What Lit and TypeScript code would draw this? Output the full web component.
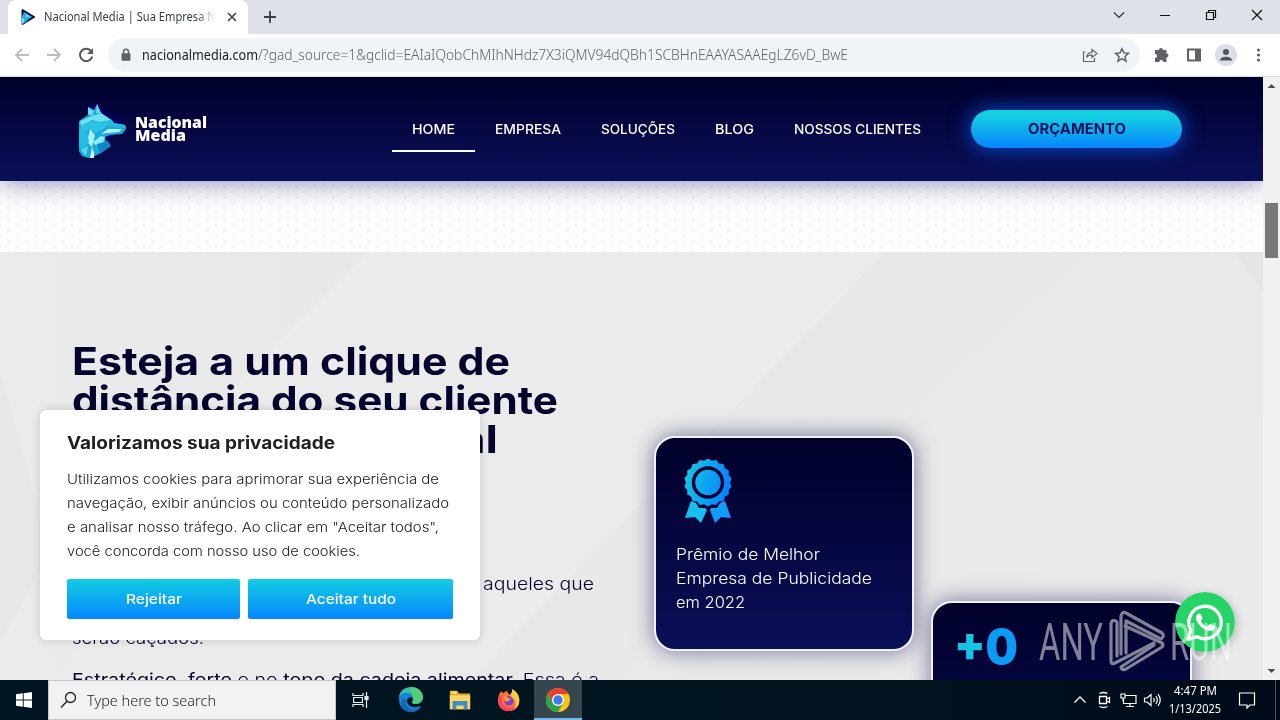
import { LitElement, html, css, svg } from "lit"
import { customElement, property } from "lit/decorators.js"
import { classMap } from "lit/directives/class-map.js"

// One line of text, stretched so that it fills the given width
@customElement("fit-line")
class FitLine extends LitElement {

  static styles = css`
  :host {
    display: block;
    white-space: pre;
  }

  .line {
    display: inline-block;
    line-height: inherit;
    vertical-align: top;
    transform-origin: 0 50%;
  }
`

  @property({ type: Number }) width = 0

  render() {
    return html`<span class="line"><slot></slot></span>`
  }

  firstUpdated() {
    const line = this.renderRoot.querySelector(".line") as HTMLElement
    const natural = line.getBoundingClientRect().width
    if (this.width && natural) {
      this.style.width = `${this.width}px`
      line.style.transform = `scaleX(${this.width / natural})`
    }
  }
}

@customElement("browser-chrome")
class BrowserChrome extends LitElement {

  static styles = css`
  :host {
    display: block;
    height: 77px;
    box-sizing: border-box;
    background: #fff;
    border-bottom: 1px solid #dadce4;
    font-family: "Noto Sans", "Open Sans", sans-serif;
    color: #3c4043;
  }

  .strip {
    display: flex;
    height: 34px;
    background: #dee1e8;
    padding-left: 8px;
  }

  .tab {
    display: flex;
    align-items: center;
    width: 240px;
    box-sizing: border-box;
    padding: 0 10px 0 12px;
    background: #fff;
    border-radius: 8px 8px 0 0;
  }

  .favicon {
    margin-right: 8px;
  }

  .title {
    flex: 1;
    height: 18px;
    font-size: 12px;
    line-height: 18px;
    overflow: hidden;
    mask-image: linear-gradient(90deg, #000 152px, transparent 172px);
  }

  .new-tab {
    margin: 10px 0 0 15px;
  }

  .windows {
    display: flex;
    align-items: center;
    gap: 34px;
    margin: -5px 17px 0 auto;
  }

  .toolbar {
    display: flex;
    align-items: center;
    height: 42px;
    padding: 0 8px 0 14px;
  }

  .toolbar > svg {
    flex: none;
  }

  .back, .forward {
    margin-right: 16px;
  }

  .omnibox {
    display: flex;
    align-items: center;
    width: 1032px;
    height: 34px;
    box-sizing: border-box;
    margin: 0 14px 0 14px;
    padding: 0 10px 0 12px;
    border-radius: 17px;
    background: #f0f3f7;
    font-size: 14px;
    font-weight: 300;
    line-height: 20px;
    color: #5f6368;
  }

  .lock {
    margin-right: 10px;
  }

  .host {
    font-weight: 400;
    color: #202124;
  }

  .share {
    margin: 0 16px 0 auto;
  }

  .side {
    margin: 0 13px 0 16px;
  }

  .avatar {
    margin-right: 13px;
  }
`

  render() {
    return html`
    <div class="strip">
      <div class="tab">
        <svg class="favicon" width="16" height="16" viewBox="0 0 16 16">
          <path d="M2.500 1.200 14 8 2.500 14.800Z" fill="#35c4ec" stroke="#090d50" stroke-width="2" stroke-linejoin="round" />
          <path d="M1.500 7l4-3 5 4-5 5.500-4 1z" fill="#29a8e0" />
          <path d="M1.500 9l3 1-1 4.500-2 .5zM6 5l4 2.500-4 1z" fill="#6fe0f5" />
        </svg>
        <div class="title"><fit-line width="178">Nacional Media | Sua Empresa Na</fit-line></div>
        <svg width="12" height="12" viewBox="0 0 12 12"><path d="M2 2l8 8M10 2l-8 8" stroke="#45494d" stroke-width="1.700" /></svg>
      </div>
      <svg class="new-tab" width="14" height="14" viewBox="0 0 14 14"><path d="M7 1v12M1 7h12" stroke="#3c4043" stroke-width="1.800" /></svg>
      <div class="windows">
        <svg width="12" height="12" viewBox="0 0 12 12"><path d="M1 3.500l5 5 5-5" fill="none" stroke="#333" stroke-width="1.200" /></svg>
        <svg width="12" height="12" viewBox="0 0 12 12"><path d="M1 6.500h10" stroke="#111" /></svg>
        <svg width="12" height="12" viewBox="0 0 12 12"><path d="M1.500 3.500h7v7h-7zM3.500 3.500v-2h7v7h-2" fill="none" stroke="#111" stroke-width="1.200" /></svg>
        <svg width="12" height="12" viewBox="0 0 12 12"><path d="M1 1l10 10M11 1L1 11" stroke="#111" stroke-width="1.200" /></svg>
      </div>
    </div>
    <div class="toolbar">
      <svg class="back" width="16" height="16" viewBox="0 0 16 16"><path d="M15 8H2M8 2L2 8l6 6" fill="none" stroke="#babcbe" stroke-width="1.800" /></svg>
      <svg class="forward" width="16" height="16" viewBox="0 0 16 16"><path d="M1 8h13M8 2l6 6-6 6" fill="none" stroke="#babcbe" stroke-width="1.800" /></svg>
      <svg width="16" height="16" viewBox="0 0 16 16">
        <path d="M13.300 4.300A6.200 6.200 0 1 0 14.200 9.500" fill="none" stroke="#55595d" stroke-width="2" />
        <path d="M15 1v6H9z" fill="#55595d" />
      </svg>
      <div class="omnibox">
        <svg class="lock" width="12" height="14" viewBox="0 0 12 14">
          <path d="M3.500 6V3.800a2.500 2.500 0 0 1 5 0V6" fill="none" stroke="#5f6368" stroke-width="1.500" />
          <rect x="1.500" y="5.300" width="9" height="7.400" rx="1" fill="#5f6368" />
        </svg>
        <fit-line class="host" width="116">nacionalmedia.com</fit-line>
        <fit-line width="590">/?gad_source=1&amp;gclid=EAIaIQobChMIhNHdz7X3iQMV94dQBh1SCBHnEAAYASAAEgLZ6vD_BwE</fit-line>
        <svg class="share" width="16" height="16" viewBox="0 0 16 16">
          <path d="M3.500 5H1.500v9.500h11V11M4.500 10.500C5 7 7 5.500 10 5.400V2.500l5 4-5 4V7.800C7.500 7.800 6 8.500 4.500 10.500z" fill="none" stroke="#5f6368" stroke-width="1.200" />
        </svg>
        <svg width="16" height="16" viewBox="0 0 16 16">
          <path d="M8 1.700l1.900 4.200 4.500.5-3.400 3.100 1 4.600L8 11.700l-4 2.400 1-4.600L1.600 6.400l4.500-.5z" fill="none" stroke="#5f6368" stroke-width="1.500" />
        </svg>
      </div>
      <svg width="16" height="16" viewBox="0 0 16 16">
        <path d="M5 3a2 2 0 0 1 4 0h3.500v3.500a2 2 0 0 1 0 4V15H9.300a2 2 0 0 0-4 0H1v-4a2 2 0 0 0 0-4V3z" fill="#5f6368" />
      </svg>
      <svg class="side" width="16" height="16" viewBox="0 0 16 16">
        <path d="M1 1.500h14v13H1zM3 3.500v9h6v-9z" fill="#5f6368" fill-rule="evenodd" />
      </svg>
      <svg class="avatar" width="22" height="22" viewBox="0 0 22 22">
        <circle cx="11" cy="11" r="11" fill="#dcdfe8" />
        <circle cx="11" cy="8" r="3" fill="#4f5566" />
        <path d="M5 16.500c0-5 12-5 12 0z" fill="#4f5566" />
      </svg>
      <svg width="16" height="16" viewBox="0 0 16 16" fill="#5f6368">
        <circle cx="8.500" cy="3" r="1.600" /><circle cx="8.500" cy="8" r="1.600" /><circle cx="8.500" cy="13" r="1.600" />
      </svg>
    </div>
    `
  }
}

const NAV = [
  { label: "HOME", width: 43, active: true },
  { label: "EMPRESA", width: 66 },
  { label: "SOLUÇÕES", width: 74 },
  { label: "BLOG", width: 39 },
  { label: "NOSSOS CLIENTES", width: 127 }
]

@customElement("site-header")
class SiteHeader extends LitElement {

  static styles = css`
  :host {
    display: flex;
    position: relative;
    z-index: 1;
    height: 104px;
    box-sizing: border-box;
    padding: 0 81px 0 78px;
    background: linear-gradient(#00002b, #050640 45%, #0a1058);
    box-shadow: 0 0 26px rgba(30, 25, 110, 0.55);
    font-family: Inter, "Liberation Sans", sans-serif;
    color: #fff;
  }

  .wolf {
    margin-top: 25px;
  }

  .name {
    width: 74px;
    margin: 39px 0 0 7px;
    font-family: "Open Sans", Inter, sans-serif;
    font-size: 16px;
    font-weight: 800;
    line-height: 12.500px;
  }

  nav {
    display: flex;
    height: 44px;
    margin: 31px 0 0 183px;
    font-size: 13px;
    font-weight: 500;
    line-height: 42px;
  }

  .item {
    padding: 0 20px;
    border-bottom: 2px solid transparent;
  }

  .item.active {
    border-color: #fff;
  }

  .quote {
    display: flex;
    justify-content: center;
    width: 211px;
    height: 38px;
    margin: 33px 0 0 auto;
    border-radius: 19px;
    background: linear-gradient(#14cfe0 15%, #0684ff);
    box-shadow: 0 0 20px 2px rgba(0, 105, 255, 0.65);
    font-size: 14px;
    font-weight: 700;
    line-height: 38px;
    color: #07115c;
  }
`

  render() {
    return html`
    <svg class="wolf" width="50" height="58" viewBox="0 0 50 58">
      <path d="M9 3L15 1 32 10 47 20 41 30 30 38 28 50 17 54 8 30z" fill="#02006a" opacity=".6" />
      <path d="M10 5l6 3 3-6 4 9 11 7 2 3 11 2 1 4-4 5-12 1-5 2 1 5 3 5-12 8-8 3-7-2-3-5V19l9-6z" fill="#1fa8d8" />
      <path d="M10 5l6 4-2 5-4-2zM19 2l4 9-5 0z" fill="#63dcee" />
      <path d="M14 14l9-3 10 7-11 2-8-2-11 6-1-5z" fill="#6de3ef" />
      <path d="M3 24l11-5 9 2 10-3-5 7-10 6-6-4-10 3z" fill="#2bc4e6" />
      <path d="M33 18l3 3 11 2 1 3-13-1-7-1z" fill="#25b9e0" />
      <path d="M23 32l7-5 14 0-3 3-12 1z" fill="#b5f4fa" />
      <path d="M12 27l5 6-3 12-5-5z" fill="#a8f2f7" />
      <path d="M15 40l8-6 4 1-2 6-8 2z" fill="#8aeef5" />
      <path d="M1 30l8-2 2 12-8 8-2-5z" fill="#23bfe3" />
      <path d="M14 45l2 6 0 5-4 0z" fill="#d0fbfd" />
      <path d="M19 42l11-3 3 5-11 8z" fill="#0f87c5" />
      <path d="M3 48l7-4-2 10z" fill="#53dbea" />
    </svg>
    <div class="name">
      <fit-line width="72">Nacional</fit-line>
      <fit-line width="51">Media</fit-line>
    </div>
    <nav>
      ${NAV.map(item => html`
      <div class=${classMap({ item: true, active: !!item.active })}><fit-line width=${item.width}>${item.label}</fit-line></div>
      `)}
    </nav>
    <div class="quote"><fit-line width="98">ORÇAMENTO</fit-line></div>
    `
  }
}

// Scalloped edge of the award medal
const medalPoints = Array.from({ length: 36 }, (_, i) => {
  const r = i % 2 ? 22 : 24
  const a = (i * Math.PI) / 18
  return `${(25 + r * Math.sin(a)).toFixed(1)},${(24.5 - r * Math.cos(a)).toFixed(1)}`
}).join(" ")

@customElement("site-hero")
class SiteHero extends LitElement {

  static styles = css`
  :host {
    display: block;
    font-family: Inter, "Liberation Sans", sans-serif;
    color: #03032e;
  }

  .dots {
    height: 71px;
    background:
      radial-gradient(circle, #f2f2f2 1px, transparent 2px) 0 0 / 18px 11px,
      radial-gradient(circle, #f5f5f5 1px, transparent 2px) 9px 5px / 18px 11px,
      #fdfdfd;
  }

  .section {
    display: flex;
    align-items: flex-start;
    position: relative;
    height: 428px;
    background: #eaeaea;
  }

  .facets {
    position: absolute;
    inset: 0;
  }

  .copy {
    position: relative;
    flex: none;
    width: 654px;
    box-sizing: border-box;
    padding: 90px 0 0 72px;
  }

  h2 {
    margin: 0 0 111px;
    font-size: 38.500px;
    font-weight: 700;
    line-height: 39px;
  }

  .text {
    margin: 0 0 15px;
    font-size: 17.300px;
    font-weight: 300;
    line-height: 27px;
  }

  .split {
    display: flex;
    gap: 5px;
  }

  .card {
    position: relative;
    flex: none;
    box-sizing: border-box;
    border: 2px solid #f1f1ff;
    border-radius: 21px;
    background: linear-gradient(#00002a, #05063f 45%, #0a1058);
    box-shadow: 0 0 22px rgba(18, 18, 90, 0.55);
    color: #fff;
  }

  .award {
    width: 260px;
    height: 215px;
    margin-top: 184px;
    padding: 20px;
    font-size: 15.500px;
    font-weight: 300;
    line-height: 24px;
  }

  .award svg {
    display: block;
    margin: 0 0 19px 7px;
  }

  .counter {
    width: 261px;
    height: 215px;
    margin: 349px 0 0 17px;
    padding: 10px 21px;
  }

  .number {
    width: 62px;
    font-size: 48px;
    font-weight: 900;
    line-height: 68px;
    color: #0a9bf5;
  }

  .plus {
    color: #16c4e4;
  }
`

  render() {
    return html`
    <div class="dots"></div>
    <div class="section">
      <svg class="facets" width="1263" height="428" viewBox="0 0 1263 428">
        <defs>
          <linearGradient id="f1" x1="0" y1="0" x2="1" y2="0.600">
            <stop offset="0" stop-color="#e4e4e4" /><stop offset=".35" stop-color="#e8e8e8" /><stop offset="1" stop-color="#eaeaea" />
          </linearGradient>
          <linearGradient id="f2" x1="0" y1="0" x2="1" y2="0">
            <stop offset="0" stop-color="#ebebeb" /><stop offset="1" stop-color="#e8e8e8" />
          </linearGradient>
        </defs>
        <path d="M0 0h367L200 170 60 428H0z" fill="url(#f2)" />
        <path d="M367 0H885L470 428H60L200 170z" fill="#ebebeb" />
        <path d="M885 0h378v428H470z" fill="url(#f1)" />
        <path d="M1235 0h28v40z" fill="#e5e5e5" />
        <path d="M0 120l50 180-50 90z" fill="#e8e8e8" />
      </svg>
      <div class="copy">
        <h2>
          <fit-line width="438">Esteja a um clique de</fit-line>
          <fit-line width="486">distância do seu cliente</fit-line>
          <fit-line width="426">no ambiente digital</fit-line>
        </h2>
        <div class="text">
          <div class="split">
            <fit-line width="406">No mercado existem os que caçam, e</fit-line>
            <fit-line width="111">aqueles que</fit-line>
          </div>
          <fit-line width="380">ficam parados à espera: esses</fit-line>
          <fit-line width="132">serão caçados.</fit-line>
        </div>
        <div class="text">
          <fit-line width="527"><b>Estratégico, forte</b> e no <b>topo da cadeia alimentar.</b> Essa é a</fit-line>
        </div>
      </div>
      <div class="card award">
        <svg width="50" height="66" viewBox="0 0 50 66">
          <defs>
            <linearGradient id="m" x1="0" y1="0" x2="1" y2=".3">
              <stop offset="0" stop-color="#18cde0" /><stop offset="1" stop-color="#0585ff" />
            </linearGradient>
          </defs>
          <polygon points=${medalPoints} fill="url(#m)" />
          <circle cx="25" cy="24.500" r="14.500" fill="none" stroke="#030336" stroke-width="3.500" />
          <path d="M8 43l5 2 3 5 6 0 2 2-6 13-6-6-10 1z" fill="#18bfee" />
          <path d="M42 43l-5 2-3 5-6 0-1 2 5 13 6-6 10 1z" fill="#109dfb" />
        </svg>
        <fit-line width="144">Prêmio de Melhor</fit-line>
        <fit-line width="196">Empresa de Publicidade</fit-line>
        <fit-line width="69">em 2022</fit-line>
      </div>
      <div class="card counter">
        <div class="number"><fit-line width="64"><span class="plus">+</span>0</fit-line></div>
      </div>
    </div>
    `
  }
}

@customElement("cookie-notice")
class CookieNotice extends LitElement {

  static styles = css`
  :host {
    display: block;
    box-sizing: border-box;
    width: 440px;
    height: 230px;
    padding: 21px 27px;
    border-radius: 6px;
    background: #fff;
    box-shadow: 0 0 10px rgba(0, 0, 0, 0.16);
    font-family: Inter, "Liberation Sans", sans-serif;
    color: #212121;
  }

  .title {
    margin-bottom: 12px;
    font-size: 17.500px;
    font-weight: 700;
    line-height: 24px;
  }

  .text {
    margin-bottom: 16px;
    font-size: 13.500px;
    font-weight: 300;
    line-height: 24px;
  }

  .buttons {
    display: grid;
    grid-template-columns: 173px 205px;
    gap: 8px;
  }

  .button {
    display: flex;
    justify-content: center;
    height: 40px;
    border-radius: 2px;
    background: linear-gradient(#13cde2, #0588ff);
    font-size: 13.500px;
    font-weight: 500;
    line-height: 40px;
    color: #fff;
  }
`

  render() {
    return html`
    <div class="title"><fit-line width="268">Valorizamos sua privacidade</fit-line></div>
    <div class="text">
      <fit-line width="372">Utilizamos cookies para aprimorar sua experiência de</fit-line>
      <fit-line width="382">navegação, exibir anúncios ou conteúdo personalizado</fit-line>
      <fit-line width="372">e analisar nosso tráfego. Ao clicar em "Aceitar todos",</fit-line>
      <fit-line width="293">você concorda com nosso uso de cookies.</fit-line>
    </div>
    <div class="buttons">
      <div class="button"><fit-line width="56">Rejeitar</fit-line></div>
      <div class="button"><fit-line width="90">Aceitar tudo</fit-line></div>
    </div>
    `
  }
}

const edge = svg`
  <path d="M1 14C0 5 6 0 13 0c7 0 12 5 12 10 0 4-3 7-7 7-3 0-4-1-4-2 0-1 1-1 1-3 0-3-3-5-6-5-5 0-8 4-8 7z" fill="#35c1b0" />
  <path d="M13 0c7 0 12 5 12 10 0 4-3 7-7 7-3 0-4-1-4-2 0-1 1-1 1-3 0-1-.5-2.500-2-4z" fill="#5fd365" opacity=".7" />
  <path d="M1 12c0-4 4-7 9-6 3 0 5 3 5 5-3-2-6 0-6 3 0 4 5 7 10 6 2 0 3-1 4-1-2 4-6 6-10 6C6 25 1 20 1 12z" fill="#1683d8" />
  <path d="M9 12c-2 4-1 8 4 10 4 1.500 8-.5 10-3-2 4-6 6-10 6-7 0-11-5-10-9 0-3 3-4.500 6-4z" fill="#125ca8" opacity=".7" />`

const explorer = svg`
  <path d="M2 3h8l2 3h12v17H2z" fill="#e8a925" />
  <path d="M2 8h22v15H2z" fill="#fcd667" />
  <path d="M5 14h16v9h-4v-4H9v4H5z" fill="#3b8dca" />
  <path d="M4 4h5v2H4z" fill="#fff3c8" />`

const firefox = svg`
  <path d="M8 5c1-1 2-2 3-2 0 2 1 3 3 4 2-1 3-4 2-6 4 2 7 5 8 10 1 8-4 14-11 14S1 20 1 14c0-4 1-8 4-11 0 2 1 3 3 2z" fill="#ff7139" />
  <path d="M16 1c4 2 7 5 8 10 1 6-2 11-6 13 3-4 3-9 0-12-2-1-4-3-3-5 1-2 2-3 1-6z" fill="#ffcb3d" />
  <path d="M2 10c-2 7 2 15 11 15 4 0 7-2 9-5-6 4-16 2-17-6-.5-3 0-5 1-7z" fill="#ff3e62" />
  <circle cx="13" cy="14" r="5" fill="#7a3fd8" />
  <path d="M6 10c2-2 5-1 6 1 2 0 3 0 3 1-1 2-3 2-4 3-2-1-4-2-5-5z" fill="#ff9a38" />`

const chrome = svg`
  <circle cx="13" cy="13" r="12" fill="#fbc116" />
  <path d="M2.600 7A12 12 0 0 1 23.400 7H13L7.800 16z" fill="#e8402f" />
  <path d="M2.600 7A12 12 0 0 0 13 25l5.200-9H7.800z" fill="#2ba24c" />
  <circle cx="13" cy="13" r="6" fill="#fff" />
  <circle cx="13" cy="13" r="4.700" fill="#3b7ded" />`

@customElement("task-bar")
class TaskBar extends LitElement {

  static styles = css`
  :host {
    display: flex;
    height: 40px;
    background: linear-gradient(90deg, #001521, #011420 70%, #010a18);
    font-family: "Noto Sans", "Open Sans", sans-serif;
    color: #fff;
  }

  .slot {
    display: flex;
    align-items: center;
    justify-content: center;
    width: 48px;
  }

  .search {
    display: flex;
    align-items: center;
    gap: 10px;
    width: 288px;
    box-sizing: border-box;
    padding-left: 11px;
    background: #f2f2f2;
    border: 1px solid #c5c7c8;
    font-size: 14.500px;
    font-weight: 300;
    color: #1f1f1f;
  }

  .apps {
    display: flex;
    gap: 1px;
    margin-left: 3px;
  }

  .app {
    display: flex;
    align-items: center;
    justify-content: center;
    width: 48px;
    box-sizing: border-box;
    border: solid transparent;
    border-width: 2px 0;
  }

  .app.active {
    background: #36464f;
    border-color: #36464f transparent #76b9ed;
  }

  .tray {
    display: flex;
    align-items: center;
    margin-left: auto;
  }

  .tray svg {
    margin-right: 8px;
  }

  .tray .network {
    margin-right: 6px;
  }

  .clock {
    display: flex;
    flex-direction: column;
    align-items: center;
    width: 52px;
    margin: 0 17px 0 0;
    font-size: 12px;
    line-height: 18px;
  }

  .peek {
    width: 4px;
    height: 40px;
    margin-left: 11px;
    border-left: 1px solid #4a5560;
  }
`

  render() {
    return html`
    <div class="slot">
      <svg width="16" height="16" viewBox="0 0 16 16"><path d="M0 2.300L6.800 1.300V7.500H0zM7.700 1.200L16 0v7.500H7.700zM0 8.500h6.800v6.200L0 13.700zM7.700 8.500H16V16l-8.300-1.200z" fill="#fff" /></svg>
    </div>
    <div class="search">
      <svg width="17" height="18" viewBox="0 0 17 18"><circle cx="10.500" cy="6.500" r="5" fill="none" stroke="#222" stroke-width="1.300" /><path d="M7 10.300L1 16.500" stroke="#222" stroke-width="1.400" /></svg>
      <fit-line width="129">Type here to search</fit-line>
    </div>
    <div class="slot">
      <svg width="18" height="18" viewBox="0 0 18 18" fill="none" stroke="#eee" stroke-width="1.200"><path d="M2 2V4.500H12V2M2 16V13.500H12V16M2.600 6.500h8.800v5H2.600zM15.500 1v16" /><path d="M14 5.500h3v3h-3z" fill="#eee" /></svg>
    </div>
    <div class="apps">
      <div class="app"><svg width="26" height="26" viewBox="0 0 26 26">${edge}</svg></div>
      <div class="app"><svg width="24" height="24" viewBox="0 0 26 26">${explorer}</svg></div>
      <div class="app"><svg width="24" height="24" viewBox="0 0 26 26">${firefox}</svg></div>
      <div class="app active"><svg width="26" height="26" viewBox="0 0 26 26">${chrome}</svg></div>
    </div>
    <div class="tray">
      <svg width="16" height="16" viewBox="0 0 16 16" fill="none" stroke="#fff" stroke-width="1.300"><path d="M2.500 10.500L8 5l5.500 5.500" /></svg>
      <svg width="16" height="18" viewBox="0 0 16 18" fill="none" stroke="#fff" stroke-width="1.300"><path d="M3.500 5.500h7v7h-7zM10.500 8l3-1.500v5l-3-1.500M3.500 2.500q4-2 8 0M3.500 15.500q4 2 8 0" /></svg>
      <svg class="network" width="17" height="16" viewBox="0 0 17 16" fill="none" stroke="#fff" stroke-width="1.200"><path d="M5 3.500h11v8H3.500V7M10 11.500v3M6 14.500h8M1 2h4v4H1zM3 6v3" /></svg>
      <svg width="18" height="16" viewBox="0 0 18 16" fill="none" stroke="#fff" stroke-width="1.200"><path d="M1.500 6h2.500L8 2.500v11L4 10H1.500zM10.500 6q1.500 2 0 4M12.800 4q3 4 0 8M15 2.200q4.500 5.800 0 11.600" /></svg>
      <div class="clock">
        <fit-line width="43">4:47 PM</fit-line>
        <fit-line width="52">1/13/2025</fit-line>
      </div>
      <svg width="18" height="18" viewBox="0 0 18 18" fill="none" stroke="#fff" stroke-width="1.200"><path d="M1.500 2h15v12H12l-3 3v-3H1.500z" /></svg>
      <div class="peek"></div>
    </div>
    `
  }
}

@customElement("app-root")
class AppRoot extends LitElement {

  static styles = css`
  :host {
    display: flex;
    flex-direction: column;
    width: 1280px;
    height: 720px;
    overflow: hidden;
  }

  .view {
    display: flex;
    position: relative;
    height: 603px;
    overflow: hidden;
  }

  .page {
    width: 1263px;
    overflow: hidden;
  }

  .scrollbar {
    display: flex;
    flex-direction: column;
    align-items: center;
    width: 17px;
    background: #f1f1f1;
  }

  .thumb {
    width: 13px;
    height: 55px;
    margin: 109px 0 auto;
    background: #787878;
  }

  .cookies {
    position: absolute;
    left: 40px;
    top: 333px;
    z-index: 2;
  }

  .whatsapp {
    position: absolute;
    left: 1175px;
    top: 515px;
    border-radius: 50%;
    box-shadow: 2px 2px 8px rgba(0, 0, 0, 0.2);
  }

  .watermark {
    position: absolute;
    left: 1034px;
    top: 530px;
    opacity: 0.5;
    font-family: Roboto, "Liberation Sans", sans-serif;
  }
`

  render() {
    return html`
    <browser-chrome></browser-chrome>
    <div class="view">
      <div class="page">
        <site-header></site-header>
        <site-hero></site-hero>
      </div>
      <div class="scrollbar">
        <svg width="17" height="17" viewBox="0 0 17 17"><path d="M4.500 11h8L8.500 7z" fill="#505050" /></svg>
        <div class="thumb"></div>
        <svg width="17" height="17" viewBox="0 0 17 17"><path d="M4.500 6h8l-4 4z" fill="#505050" /></svg>
      </div>
      <cookie-notice class="cookies"></cookie-notice>
      <svg class="whatsapp" width="60" height="60" viewBox="0 0 60 60">
        <circle cx="30" cy="30" r="30" fill="#25d366" />
        <path d="M13 47.500L15.700 38A16.200 16.200 0 1 1 22.300 44.700z" fill="none" stroke="#fff" stroke-width="3.300" stroke-linejoin="round" />
        <path d="M24 21.500c-1.500 0-3 2-3 4.500 0 5 8 13 14 13 3 0 5-2 5-4 0-1-4-3-5-3-1 0-2 2.500-3 2.500-2 0-6-4-6-5.500 0-1 1.500-2 1.500-2.500 0-1-1.500-5-3.500-5z" fill="#fff" />
      </svg>
      <svg class="watermark" width="200" height="68" viewBox="0 0 200 68">
        <text x="5" y="53" font-size="52" font-weight="400" fill="#fff" textLength="64" lengthAdjust="spacingAndGlyphs">ANY</text>
        <g fill="none" stroke="#fff" stroke-width="3.200" stroke-linejoin="round" stroke-linecap="round">
          <path d="M83 49V15q-5-4-6 2V54q0 4 4 2L120 36" />
          <path d="M87 47V9q1-5 5-3l36 20q3 3-1 6L92 14v32" />
          <path d="M91 19l37 17q2 2 0 4L92 62q-4 2-5-2l33-22" />
        </g>
        <text x="136" y="53" font-size="52" font-weight="400" fill="#fff" textLength="62" lengthAdjust="spacingAndGlyphs">RUN</text>
      </svg>
    </div>
    <task-bar></task-bar>
    `
  }
}
